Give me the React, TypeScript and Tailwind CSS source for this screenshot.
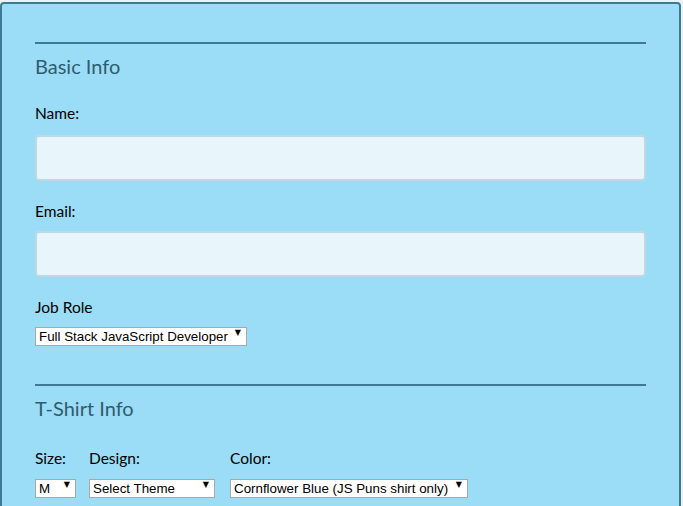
import React from "react";

function Sel({ w, value }: { w: string; value: string }) {
  return (
    <div className={`relative ${w} h-[19px]`}>
      <select
        defaultValue={value}
        className="appearance-none w-full h-full bg-white border border-[#a9a9a9] pl-[3px] pr-[14px] text-[13.33px] leading-[17px] text-black outline-none"
        style={{ fontFamily: '"Liberation Sans", Arial, sans-serif' }}
      >
        <option>{value}</option>
      </select>
      <span
        className="pointer-events-none absolute right-[6px] top-[5px] text-[8px] leading-[10px] text-black"
        style={{ fontFamily: '"DejaVu Sans", sans-serif' }}
      >
        ▼
      </span>
    </div>
  );
}

export default function App() {
  return (
    <div
      className="min-h-[506px] w-[683px] bg-[#e9f2f6] pt-[2px] overflow-hidden"
      style={{ fontFamily: 'Lato, "Noto Sans", sans-serif' }}
    >
      <div className="w-[681px] h-[520px] bg-[#9bdcf7] border-2 border-[#3e7a95] rounded-t-[4px] pl-[33px] pr-[33px]">
        <div className="h-[2px] bg-[#3e7a95] mt-[38px]" />
        <div className="mt-[10px] text-[20px] leading-[24px] text-[#2f5c70]">Basic Info</div>
        <div className="mt-[26px] text-[15.5px] leading-[18px] text-black">Name:</div>
        <div className="mt-[13px] h-[46px] rounded-[4px] border-2 border-[#bfd9e4] bg-[#e8f5fb]" />
        <div className="mt-[21px] text-[15.5px] leading-[18px] text-black">Email:</div>
        <div className="mt-[11px] h-[46px] rounded-[4px] border-2 border-[#bfd9e4] bg-[#e8f5fb]" />
        <div className="mt-[21px] text-[15.5px] leading-[18px] text-black">Job Role</div>
        <div className="mt-[7px]">
          <Sel w="w-[212px]" value="Full Stack JavaScript Developer" />
        </div>
        <div className="h-[2px] bg-[#3e7a95] mt-[42px]" />
        <div className="mt-[10px] text-[20px] leading-[24px] text-[#2f5c70]">T-Shirt Info</div>
        <div className="mt-[29px] flex">
          <div className="w-[54px]">
            <div className="text-[15.5px] leading-[18px] text-black">Size:</div>
            <div className="mt-[8px]">
              <Sel w="w-[41px]" value="M" />
            </div>
          </div>
          <div className="w-[141px]">
            <div className="text-[15.5px] leading-[18px] text-black">Design:</div>
            <div className="mt-[8px]">
              <Sel w="w-[126px]" value="Select Theme" />
            </div>
          </div>
          <div>
            <div className="text-[15.5px] leading-[18px] text-black">Color:</div>
            <div className="mt-[8px]">
              <Sel w="w-[238px]" value="Cornflower Blue (JS Puns shirt only)" />
            </div>
          </div>
        </div>
      </div>
    </div>
  );
}
